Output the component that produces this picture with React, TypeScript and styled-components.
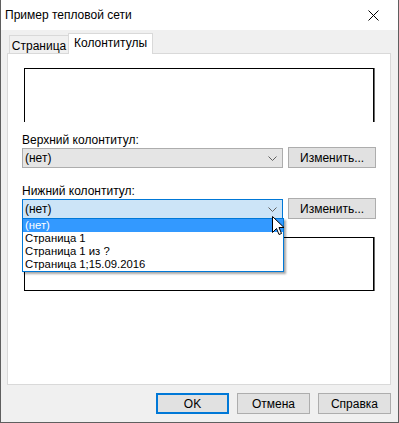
import React from "react";
import styled, { createGlobalStyle } from "styled-components";

const GlobalStyle = createGlobalStyle`
  html, body {
    margin: 0;
    padding: 0;
    background: #ffffff;
  }
  body {
    font-family: "Liberation Sans", "Noto Sans", sans-serif;
    font-size: 12px;
    color: #000;
  }
`;

const footerOptions = ["(нет)", "Страница 1", "Страница 1 из ?", "Страница 1;15.09.2016"];

const Chevron = () => (
  <svg width="9" height="5" viewBox="0 0 9 5">
    <polyline points="0.5,0.5 4.5,4.5 8.5,0.5" fill="none" stroke="#606060" strokeWidth="1" />
  </svg>
);

const Cursor = () => (
  <svg width="13" height="20" viewBox="0 0 13 20">
    <path
      d="M0.5 0.5 L0.5 16.5 L4.5 12.5 L7 18.5 L9.5 17.5 L7 11.5 L12 11.5 Z"
      fill="#fff"
      stroke="#000"
      strokeWidth="1"
      strokeLinejoin="miter"
    />
  </svg>
);

const App = () => {
  return (
    <>
      <GlobalStyle />
      <Window>
        <TitleBar>
          <Title>Пример тепловой сети</Title>
          <CloseButton>
            <svg width="11" height="11" viewBox="0 0 11 11">
              <path d="M0.5 0.5 L10.5 10.5 M10.5 0.5 L0.5 10.5" stroke="#000" strokeWidth="1" />
            </svg>
          </CloseButton>
        </TitleBar>
        <Body>
          <Tabs>
            <Tab $width={60}>Страница</Tab>
            <Tab $active $width={85}>
              Колонтитулы
            </Tab>
          </Tabs>
          <Panel>
            <Preview $side="top" />
            <Label $gap={11}>Верхний колонтитул:</Label>
            <Row>
              <Combo>
                <ComboText>(нет)</ComboText>
                <Chevron />
              </Combo>
              <Button $width={88}>Изменить...</Button>
            </Row>
            <Label $gap={16}>Нижний колонтитул:</Label>
            <Row>
              <Combo $focused>
                <ComboText>(нет)</ComboText>
                <Chevron />
                <DropList>
                  {footerOptions.map((o, i) => (
                    <Option key={o} $selected={i === 0}>
                      {o}
                    </Option>
                  ))}
                </DropList>
                <Pointer>
                  <Cursor />
                </Pointer>
              </Combo>
              <Button $width={88}>Изменить...</Button>
            </Row>
            <Preview $side="bottom" />
          </Panel>
          <Footer>
            <Button $width={73} $default>
              OK
            </Button>
            <Button $width={73}>Отмена</Button>
            <Button $width={73}>Справка</Button>
          </Footer>
        </Body>
      </Window>
    </>
  );
};

export default App;

const Window = styled.div`
  width: 399px;
  height: 423px;
  box-sizing: border-box;
  border: 1px solid #5f5f5f;
  border-top: none;
  display: flex;
  flex-direction: column;
  background: #f0f0f0;
`;

const TitleBar = styled.div`
  height: 30px;
  background: #ffffff;
  display: flex;
  align-items: center;
  justify-content: space-between;
  padding-left: 4px;
`;

const Title = styled.span`
  font-size: 12px;
`;

const CloseButton = styled.div`
  width: 46px;
  height: 30px;
  display: flex;
  align-items: center;
  justify-content: center;
  margin-right: 2px;
`;

const Body = styled.div`
  flex: 1;
  display: flex;
  flex-direction: column;
  padding: 3px 7px 0 6px;
`;

const Tabs = styled.div`
  height: 20px;
  display: flex;
  align-items: flex-end;
  padding-left: 2px;
`;

const Tab = styled.div<{ $active?: boolean; $width: number }>`
  box-sizing: border-box;
  width: ${(p) => p.$width}px;
  height: ${(p) => (p.$active ? 21 : 18)}px;
  margin-bottom: ${(p) => (p.$active ? -1 : 0)}px;
  margin-left: ${(p) => (p.$active ? -1 : 0)}px;
  border: 1px solid #d9d9d9;
  border-bottom: none;
  background: ${(p) => (p.$active ? "#ffffff" : "#f0f0f0")};
  display: flex;
  justify-content: center;
  padding-top: ${(p) => (p.$active ? 2 : 3)}px;
  line-height: 14px;
  position: relative;
  z-index: ${(p) => (p.$active ? 1 : 0)};
`;

const Panel = styled.div`
  height: 332px;
  box-sizing: border-box;
  border: 1px solid #d9d9d9;
  background: #ffffff;
  padding: 14px 14px 0 14px;
  display: flex;
  flex-direction: column;
`;

const Preview = styled.div<{ $side: "top" | "bottom" }>`
  height: 54px;
  width: 350px;
  box-sizing: border-box;
  margin-left: 2px;
  margin-top: ${(p) => (p.$side === "bottom" ? 18 : 0)}px;
  border: 1px solid #000;
  ${(p) => (p.$side === "top" ? "border-bottom: none;" : "")}
  box-shadow: 1px 0 0 #6a6a6a;
`;

const Label = styled.div<{ $gap: number }>`
  margin-top: ${(p) => p.$gap}px;
  height: 15px;
  line-height: 15px;
`;

const Row = styled.div`
  display: flex;
  align-items: flex-start;
  gap: 5px;
`;

const Combo = styled.div<{ $focused?: boolean }>`
  position: relative;
  box-sizing: border-box;
  width: 262px;
  height: 20px;
  border: 1px solid ${(p) => (p.$focused ? "#0078d7" : "#adadad")};
  background: ${(p) => (p.$focused ? "#cce4f7" : "#e5e5e5")};
  display: flex;
  align-items: center;
  justify-content: space-between;
  padding: 0 5px 0 2px;
`;

const ComboText = styled.span`
  line-height: 16px;
`;

const DropList = styled.div`
  position: absolute;
  top: 18px;
  left: -1px;
  width: 262px;
  box-sizing: border-box;
  border: 1px solid #0078d7;
  background: #ffffff;
  box-shadow: 2px 2px 2px rgba(0, 0, 0, 0.35);
  z-index: 2;
`;

const Option = styled.div<{ $selected?: boolean }>`
  height: 13px;
  line-height: 13px;
  font-size: 11.3px;
  padding-left: 2px;
  background: ${(p) => (p.$selected ? "#3399ff" : "transparent")};
  color: ${(p) => (p.$selected ? "#ffffff" : "#000000")};
  white-space: nowrap;
`;

const Pointer = styled.div`
  position: absolute;
  left: 249px;
  top: 16px;
  z-index: 3;
  line-height: 0;
`;

const Button = styled.div<{ $width: number; $default?: boolean }>`
  box-sizing: border-box;
  width: ${(p) => p.$width}px;
  height: 21px;
  border: ${(p) => (p.$default ? "2px solid #0078d7" : "1px solid #adadad")};
  background: #e1e1e1;
  display: flex;
  align-items: center;
  justify-content: center;
  margin-top: -1px;
`;

const Footer = styled.div`
  display: flex;
  justify-content: flex-end;
  gap: 8px;
  padding-top: 9px;
  padding-right: 0px;
`;
